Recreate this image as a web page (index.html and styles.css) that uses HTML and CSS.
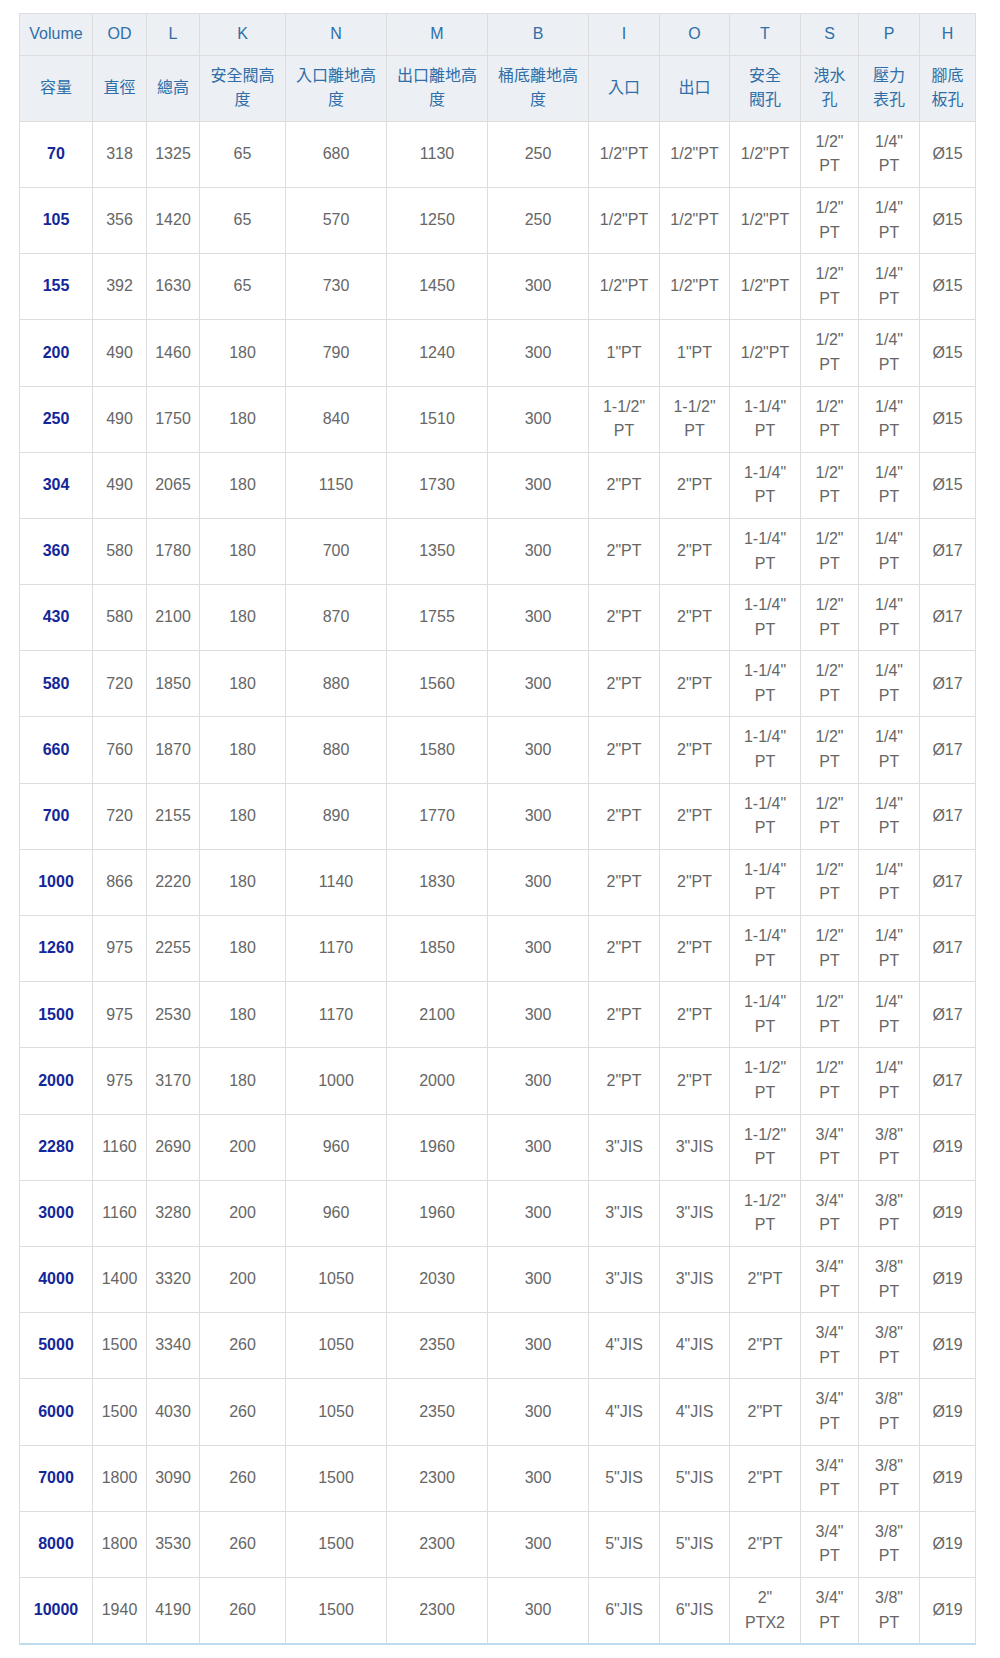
FILE: index.html
```html
<!DOCTYPE html>
<html lang="zh-Hant">
<head>
<meta charset="utf-8">
<title>規格表</title>
<link rel="stylesheet" href="styles.css">
</head>
<body>
<div class="wrap">
<table class="spec">
<colgroup>
<col class="c1"><col class="c2"><col class="c3"><col class="c4"><col class="c5"><col class="c6"><col class="c7"><col class="c8"><col class="c9"><col class="c10"><col class="c11"><col class="c12"><col class="c13">
</colgroup>
<thead>
<tr class="h1"><th>Volume</th><th>OD</th><th>L</th><th>K</th><th>N</th><th>M</th><th>B</th><th>I</th><th>O</th><th>T</th><th>S</th><th>P</th><th>H</th></tr>
<tr class="h2"><th>容量</th><th>直徑</th><th>總高</th><th>安全閥高<br>度</th><th>入口離地高<br>度</th><th>出口離地高<br>度</th><th>桶底離地高<br>度</th><th>入口</th><th>出口</th><th>安全<br>閥孔</th><th>洩水<br>孔</th><th>壓力<br>表孔</th><th>腳底<br>板孔</th></tr>
</thead>
<tbody>
<tr><td class="v">70</td><td>318</td><td>1325</td><td>65</td><td>680</td><td>1130</td><td>250</td><td>1/2"PT</td><td>1/2"PT</td><td>1/2"PT</td><td>1/2"<br>PT</td><td>1/4"<br>PT</td><td>Ø15</td></tr>
<tr><td class="v">105</td><td>356</td><td>1420</td><td>65</td><td>570</td><td>1250</td><td>250</td><td>1/2"PT</td><td>1/2"PT</td><td>1/2"PT</td><td>1/2"<br>PT</td><td>1/4"<br>PT</td><td>Ø15</td></tr>
<tr><td class="v">155</td><td>392</td><td>1630</td><td>65</td><td>730</td><td>1450</td><td>300</td><td>1/2"PT</td><td>1/2"PT</td><td>1/2"PT</td><td>1/2"<br>PT</td><td>1/4"<br>PT</td><td>Ø15</td></tr>
<tr><td class="v">200</td><td>490</td><td>1460</td><td>180</td><td>790</td><td>1240</td><td>300</td><td>1"PT</td><td>1"PT</td><td>1/2"PT</td><td>1/2"<br>PT</td><td>1/4"<br>PT</td><td>Ø15</td></tr>
<tr><td class="v">250</td><td>490</td><td>1750</td><td>180</td><td>840</td><td>1510</td><td>300</td><td>1-1/2"<br>PT</td><td>1-1/2"<br>PT</td><td>1-1/4"<br>PT</td><td>1/2"<br>PT</td><td>1/4"<br>PT</td><td>Ø15</td></tr>
<tr><td class="v">304</td><td>490</td><td>2065</td><td>180</td><td>1150</td><td>1730</td><td>300</td><td>2"PT</td><td>2"PT</td><td>1-1/4"<br>PT</td><td>1/2"<br>PT</td><td>1/4"<br>PT</td><td>Ø15</td></tr>
<tr><td class="v">360</td><td>580</td><td>1780</td><td>180</td><td>700</td><td>1350</td><td>300</td><td>2"PT</td><td>2"PT</td><td>1-1/4"<br>PT</td><td>1/2"<br>PT</td><td>1/4"<br>PT</td><td>Ø17</td></tr>
<tr><td class="v">430</td><td>580</td><td>2100</td><td>180</td><td>870</td><td>1755</td><td>300</td><td>2"PT</td><td>2"PT</td><td>1-1/4"<br>PT</td><td>1/2"<br>PT</td><td>1/4"<br>PT</td><td>Ø17</td></tr>
<tr><td class="v">580</td><td>720</td><td>1850</td><td>180</td><td>880</td><td>1560</td><td>300</td><td>2"PT</td><td>2"PT</td><td>1-1/4"<br>PT</td><td>1/2"<br>PT</td><td>1/4"<br>PT</td><td>Ø17</td></tr>
<tr><td class="v">660</td><td>760</td><td>1870</td><td>180</td><td>880</td><td>1580</td><td>300</td><td>2"PT</td><td>2"PT</td><td>1-1/4"<br>PT</td><td>1/2"<br>PT</td><td>1/4"<br>PT</td><td>Ø17</td></tr>
<tr><td class="v">700</td><td>720</td><td>2155</td><td>180</td><td>890</td><td>1770</td><td>300</td><td>2"PT</td><td>2"PT</td><td>1-1/4"<br>PT</td><td>1/2"<br>PT</td><td>1/4"<br>PT</td><td>Ø17</td></tr>
<tr><td class="v">1000</td><td>866</td><td>2220</td><td>180</td><td>1140</td><td>1830</td><td>300</td><td>2"PT</td><td>2"PT</td><td>1-1/4"<br>PT</td><td>1/2"<br>PT</td><td>1/4"<br>PT</td><td>Ø17</td></tr>
<tr><td class="v">1260</td><td>975</td><td>2255</td><td>180</td><td>1170</td><td>1850</td><td>300</td><td>2"PT</td><td>2"PT</td><td>1-1/4"<br>PT</td><td>1/2"<br>PT</td><td>1/4"<br>PT</td><td>Ø17</td></tr>
<tr><td class="v">1500</td><td>975</td><td>2530</td><td>180</td><td>1170</td><td>2100</td><td>300</td><td>2"PT</td><td>2"PT</td><td>1-1/4"<br>PT</td><td>1/2"<br>PT</td><td>1/4"<br>PT</td><td>Ø17</td></tr>
<tr><td class="v">2000</td><td>975</td><td>3170</td><td>180</td><td>1000</td><td>2000</td><td>300</td><td>2"PT</td><td>2"PT</td><td>1-1/2"<br>PT</td><td>1/2"<br>PT</td><td>1/4"<br>PT</td><td>Ø17</td></tr>
<tr><td class="v">2280</td><td>1160</td><td>2690</td><td>200</td><td>960</td><td>1960</td><td>300</td><td>3"JIS</td><td>3"JIS</td><td>1-1/2"<br>PT</td><td>3/4"<br>PT</td><td>3/8"<br>PT</td><td>Ø19</td></tr>
<tr><td class="v">3000</td><td>1160</td><td>3280</td><td>200</td><td>960</td><td>1960</td><td>300</td><td>3"JIS</td><td>3"JIS</td><td>1-1/2"<br>PT</td><td>3/4"<br>PT</td><td>3/8"<br>PT</td><td>Ø19</td></tr>
<tr><td class="v">4000</td><td>1400</td><td>3320</td><td>200</td><td>1050</td><td>2030</td><td>300</td><td>3"JIS</td><td>3"JIS</td><td>2"PT</td><td>3/4"<br>PT</td><td>3/8"<br>PT</td><td>Ø19</td></tr>
<tr><td class="v">5000</td><td>1500</td><td>3340</td><td>260</td><td>1050</td><td>2350</td><td>300</td><td>4"JIS</td><td>4"JIS</td><td>2"PT</td><td>3/4"<br>PT</td><td>3/8"<br>PT</td><td>Ø19</td></tr>
<tr><td class="v">6000</td><td>1500</td><td>4030</td><td>260</td><td>1050</td><td>2350</td><td>300</td><td>4"JIS</td><td>4"JIS</td><td>2"PT</td><td>3/4"<br>PT</td><td>3/8"<br>PT</td><td>Ø19</td></tr>
<tr><td class="v">7000</td><td>1800</td><td>3090</td><td>260</td><td>1500</td><td>2300</td><td>300</td><td>5"JIS</td><td>5"JIS</td><td>2"PT</td><td>3/4"<br>PT</td><td>3/8"<br>PT</td><td>Ø19</td></tr>
<tr><td class="v">8000</td><td>1800</td><td>3530</td><td>260</td><td>1500</td><td>2300</td><td>300</td><td>5"JIS</td><td>5"JIS</td><td>2"PT</td><td>3/4"<br>PT</td><td>3/8"<br>PT</td><td>Ø19</td></tr>
<tr><td class="v">10000</td><td>1940</td><td>4190</td><td>260</td><td>1500</td><td>2300</td><td>300</td><td>6"JIS</td><td>6"JIS</td><td>2"<br>PTX2</td><td>3/4"<br>PT</td><td>3/8"<br>PT</td><td>Ø19</td></tr>
</tbody>
</table>
</div>
</body>
</html>
```
FILE: styles.css
```css
html, body {
  margin: 0;
  padding: 0;
  background: #ffffff;
}

.wrap {
  padding: 13px 0 0 19px;
}

.spec {
  border-collapse: collapse;
  table-layout: fixed;
  width: 956px;
  font-family: "Liberation Sans", Arial, "Noto Sans CJK TC", sans-serif;
  font-size: 16px;
  line-height: 24.6px;
  color: #666666;
  text-align: center;
  border-bottom: 2px solid #bfdcef;
}

.c1 { width: 73px; }
.c2 { width: 54px; }
.c3 { width: 53px; }
.c4 { width: 86px; }
.c5 { width: 101px; }
.c6 { width: 101px; }
.c7 { width: 101px; }
.c8 { width: 71px; }
.c9 { width: 70px; }
.c10 { width: 71px; }
.c11 { width: 58px; }
.c12 { width: 61px; }
.c13 { width: 56px; }

.spec th,
.spec td {
  border: 1px solid #dddddd;
  padding: 8px 0;
  vertical-align: middle;
  font-weight: normal;
}

.spec th {
  background: #ecf0f4;
  color: #2f6ea8;
}

.spec td.v {
  color: #13269a;
  font-weight: bold;
}

.spec tbody tr:last-child td {
  border-bottom: 2px solid #bfdcef;
}
```
